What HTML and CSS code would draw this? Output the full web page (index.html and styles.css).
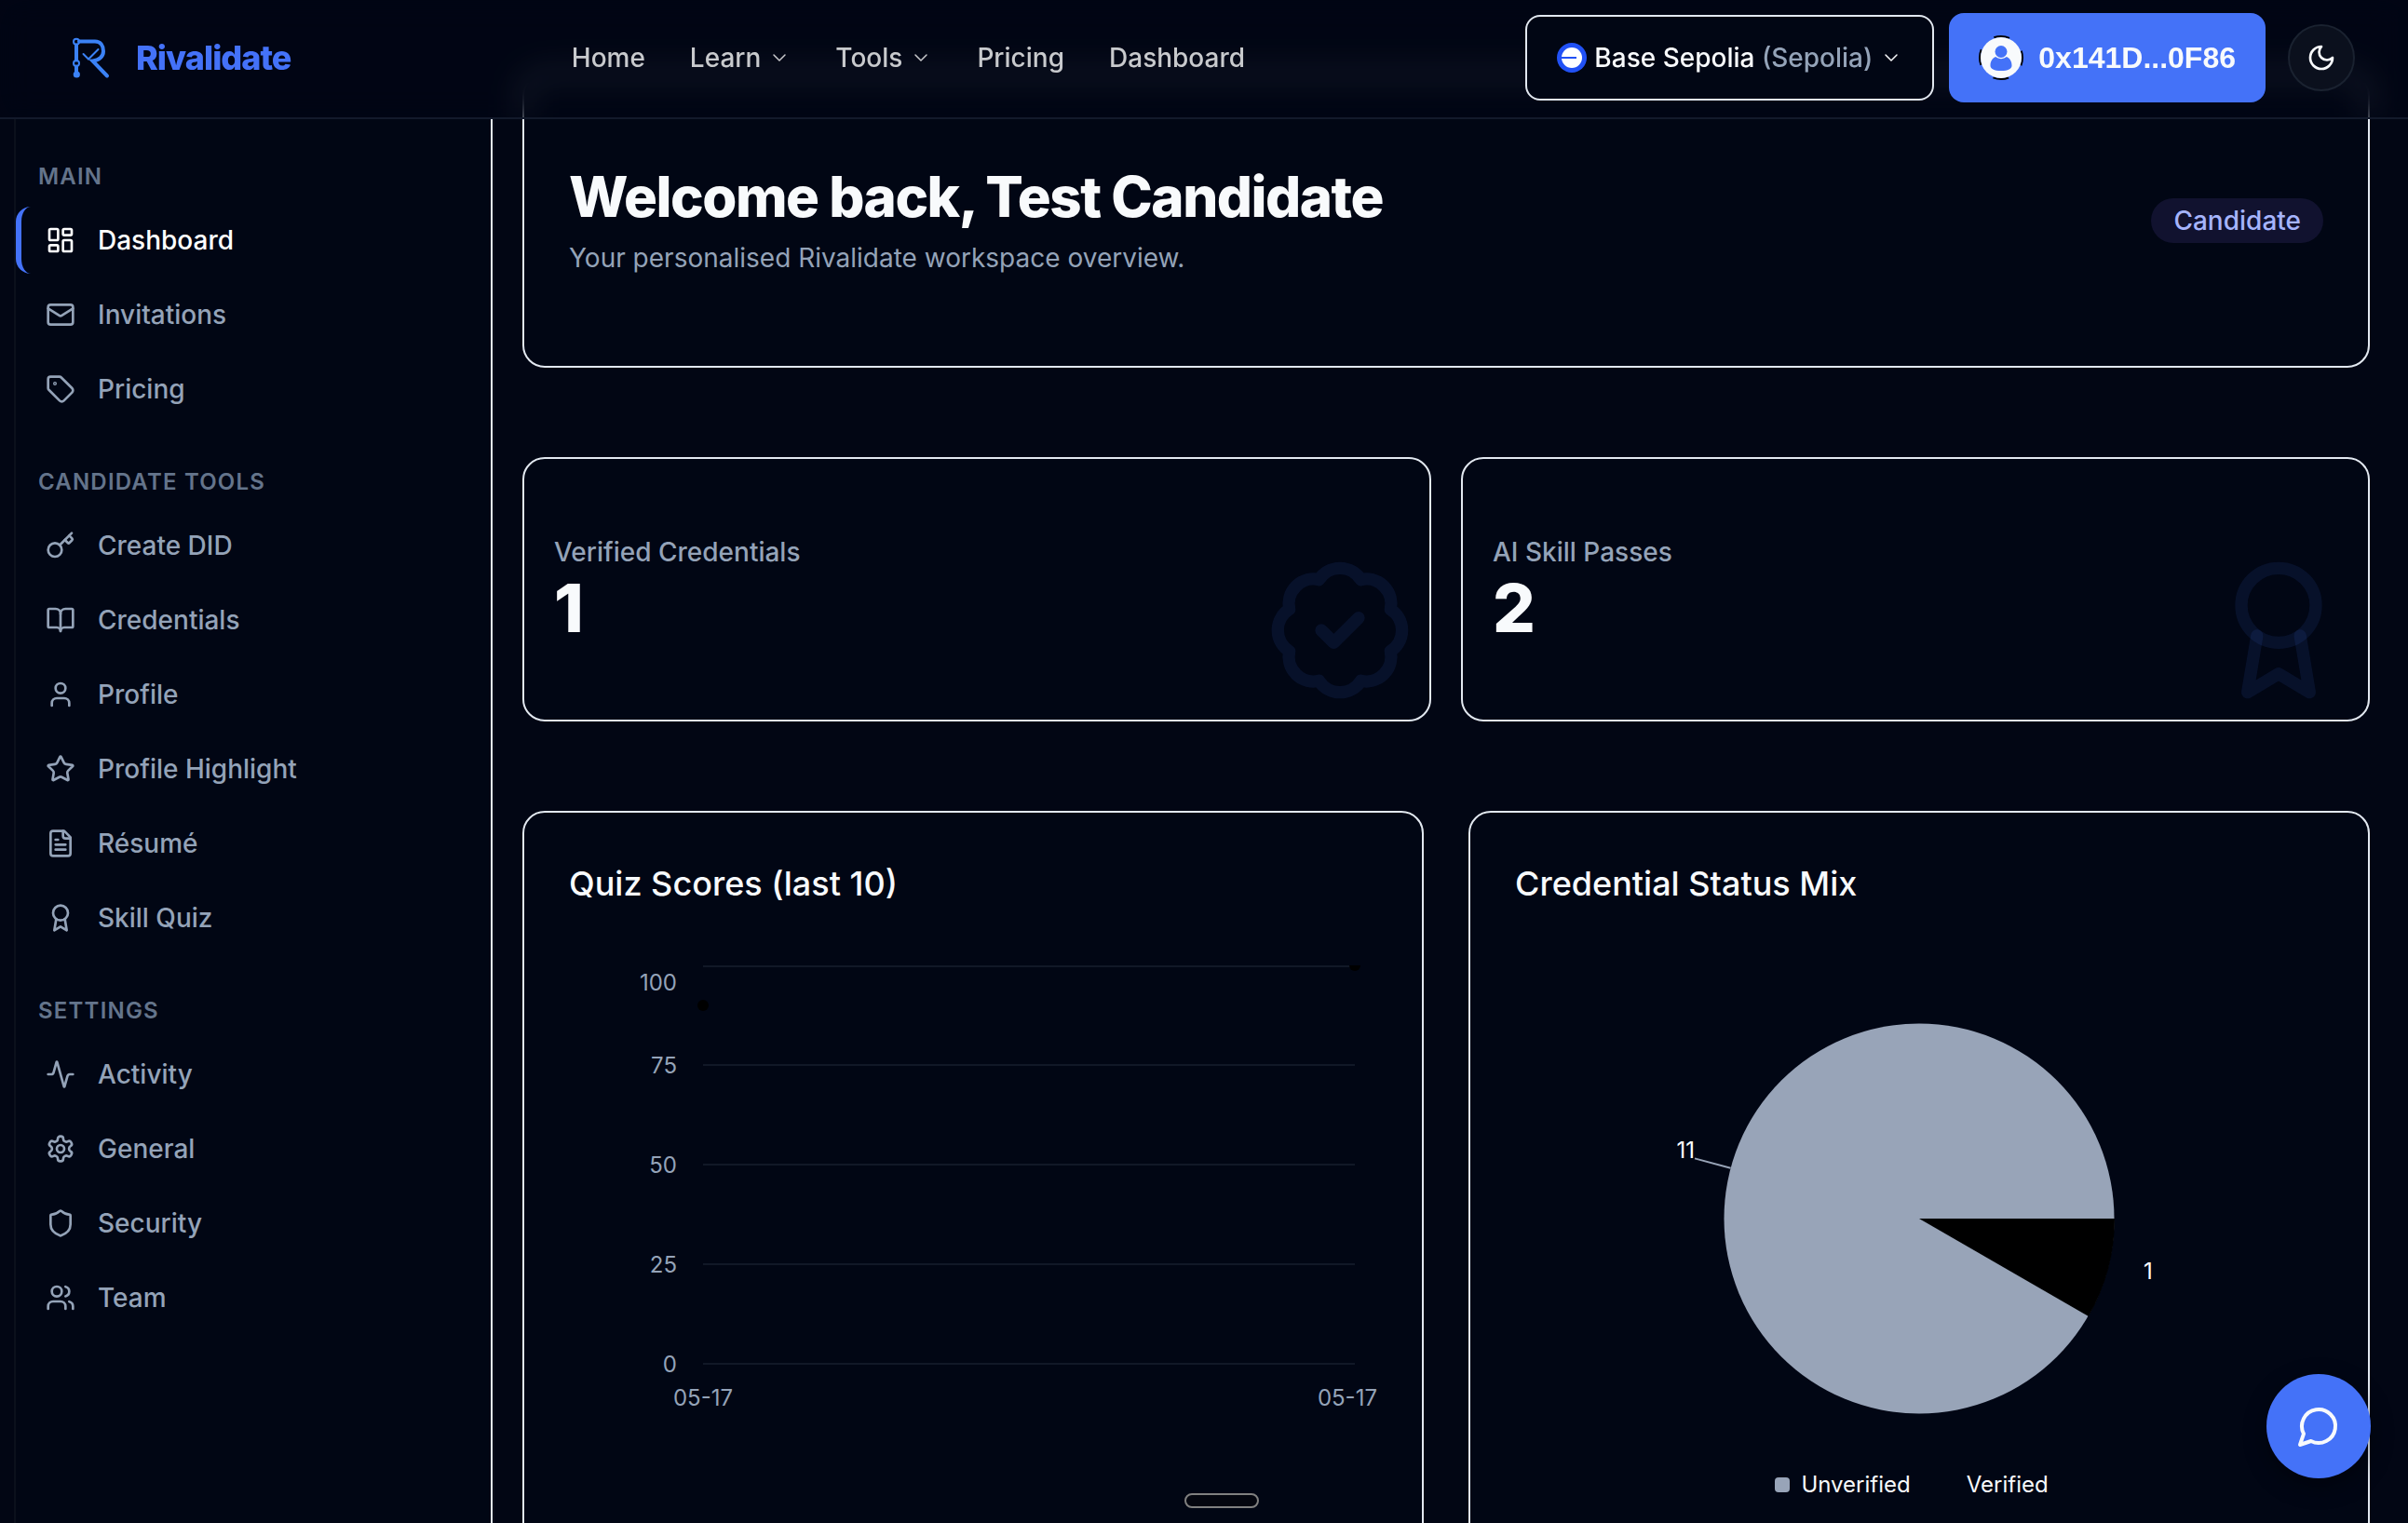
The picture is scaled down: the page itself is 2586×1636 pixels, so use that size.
FILE: index.html
```html
<!DOCTYPE html>
<html lang="en">
<head>
<meta charset="utf-8">
<meta name="viewport" content="width=device-width, initial-scale=1">
<title>Dashboard – Rivalidate</title>
<link rel="stylesheet" href="styles.css">
</head>
<body>
<svg class="sprite" aria-hidden="true">
  <symbol id="chevron" viewBox="0 0 24 24"><path d="m6 9 6 6 6-6"/></symbol>
  <symbol id="award" viewBox="0 0 24 24"><circle cx="12" cy="8" r="6"/><path d="M15.477 12.89 17 22l-5-3-5 3 1.523-9.11"/></symbol>
</svg>

<header class="topbar">
  <a class="brand" href="#">
    <svg class="brand-mark" viewBox="0 0 48 48" aria-hidden="true">
      <path class="mark-line" d="M13 6.500H30c6 0 9 4.500 9 10.500S34 27 27.500 27.500L43 43.500M10 10.500V26.500M10 33.500V41"/>
      <path class="mark-check" d="m17.500 20 5.500 5.500L33.500 15"/>
      <circle class="mark-node" cx="10" cy="6.700" r="3"/>
      <circle class="mark-node" cx="10" cy="30" r="3"/>
      <circle class="mark-dot" cx="10.300" cy="42" r="3.600"/>
    </svg>
    <span>Rivalidate</span>
  </a>
  <nav class="topnav" aria-label="Primary">
    <a href="#">Home</a>
    <button type="button">Learn <svg class="icon-sm"><use href="#chevron"/></svg></button>
    <button type="button">Tools <svg class="icon-sm"><use href="#chevron"/></svg></button>
    <a href="#">Pricing</a>
    <a href="#">Dashboard</a>
  </nav>
  <div class="actions">
    <button class="network" type="button">
      <svg class="chain" viewBox="0 0 32 32" aria-hidden="true"><circle cx="16" cy="16" r="16" fill="#2151f5"/><circle cx="16" cy="16" r="11" fill="#fff"/><path d="M4 15h17v2H4z" fill="#2151f5"/></svg>
      <span>Base Sepolia <span class="muted">(Sepolia)</span></span>
      <svg class="icon-sm"><use href="#chevron"/></svg>
    </button>
    <button class="wallet" type="button">
      <svg class="avatar" viewBox="0 0 48 48" aria-hidden="true">
        <circle cx="24" cy="24" r="23" fill="none" stroke="#000" stroke-width="2" stroke-dasharray="17 19.130" stroke-dashoffset="8.500"/>
        <circle cx="24" cy="24" r="22" fill="#f8fafc"/>
        <circle cx="24" cy="17.500" r="6.500" fill="#4472f8"/>
        <path d="M12.500 32.500c0-4.500 2-8 5.500-9.500a9.500 9.500 0 0 0 12 0c3.500 1.500 5.500 5 5.500 9.500 0 3.500-4 5.500-11.500 5.500s-11.500-2-11.500-5.500z" fill="#4472f8"/>
      </svg>
      0x141D...0F86
    </button>
    <button class="theme" type="button" aria-label="Toggle theme">
      <svg class="icon" viewBox="0 0 24 24"><path d="M12 3a6 6 0 0 0 9 9 9 9 0 1 1-9-9Z"/></svg>
    </button>
  </div>
</header>

<div class="shell">
  <aside class="sidebar">
    <nav class="group" aria-label="Main">
      <h2>Main</h2>
      <a class="active" href="#" aria-current="page"><svg class="icon" viewBox="0 0 24 24"><rect width="7" height="9" x="3" y="3" rx="1"/><rect width="7" height="5" x="14" y="3" rx="1"/><rect width="7" height="9" x="14" y="12" rx="1"/><rect width="7" height="5" x="3" y="16" rx="1"/></svg>Dashboard</a>
      <a href="#"><svg class="icon" viewBox="0 0 24 24"><rect width="20" height="16" x="2" y="4" rx="2"/><path d="m22 7-8.970 5.700a1.940 1.940 0 0 1-2.060 0L2 7"/></svg>Invitations</a>
      <a href="#"><svg class="icon" viewBox="0 0 24 24"><path d="M12.586 2.586A2 2 0 0 0 11.172 2H4a2 2 0 0 0-2 2v7.172a2 2 0 0 0 .586 1.414l8.704 8.704a2.426 2.426 0 0 0 3.420 0l6.580-6.580a2.426 2.426 0 0 0 0-3.420z"/><circle cx="7.500" cy="7.500" r=".5"/></svg>Pricing</a>
    </nav>
    <nav class="group" aria-label="Candidate tools">
      <h2>Candidate Tools</h2>
      <a href="#"><svg class="icon" viewBox="0 0 24 24"><path d="m15.500 7.500 2.300 2.300a1 1 0 0 0 1.400 0l2.100-2.100a1 1 0 0 0 0-1.400L19 4"/><path d="m21 2-9.600 9.600"/><circle cx="7.500" cy="15.500" r="5.500"/></svg>Create DID</a>
      <a href="#"><svg class="icon" viewBox="0 0 24 24"><path d="M12 7v14"/><path d="M3 18a1 1 0 0 1-1-1V4a1 1 0 0 1 1-1h5a4 4 0 0 1 4 4 4 4 0 0 1 4-4h5a1 1 0 0 1 1 1v13a1 1 0 0 1-1 1h-6a3 3 0 0 0-3 3 3 3 0 0 0-3-3z"/></svg>Credentials</a>
      <a href="#"><svg class="icon" viewBox="0 0 24 24"><path d="M19 21v-2a4 4 0 0 0-4-4H9a4 4 0 0 0-4 4v2"/><circle cx="12" cy="7" r="4"/></svg>Profile</a>
      <a href="#"><svg class="icon" viewBox="0 0 24 24"><path d="M11.525 2.295a.53.53 0 0 1 .95 0l2.310 4.679a2.123 2.123 0 0 0 1.595 1.160l5.166.756a.53.53 0 0 1 .294.904l-3.736 3.638a2.123 2.123 0 0 0-.611 1.878l.882 5.140a.53.53 0 0 1-.771.560l-4.618-2.428a2.122 2.122 0 0 0-1.973 0L6.396 21.010a.53.53 0 0 1-.770-.560l.881-5.139a2.122 2.122 0 0 0-.611-1.879L2.160 9.795a.53.53 0 0 1 .294-.906l5.165-.755a2.122 2.122 0 0 0 1.597-1.160z"/></svg>Profile Highlight</a>
      <a href="#"><svg class="icon" viewBox="0 0 24 24"><path d="M15 2H6a2 2 0 0 0-2 2v16a2 2 0 0 0 2 2h12a2 2 0 0 0 2-2V7Z"/><path d="M14 2v4a2 2 0 0 0 2 2h4M10 9H8M16 13H8M16 17H8"/></svg>Résumé</a>
      <a href="#"><svg class="icon"><use href="#award"/></svg>Skill Quiz</a>
    </nav>
    <nav class="group" aria-label="Settings">
      <h2>Settings</h2>
      <a href="#"><svg class="icon" viewBox="0 0 24 24"><path d="M22 12h-2.480a2 2 0 0 0-1.930 1.460l-2.350 8.360a.25.25 0 0 1-.48 0L9.240 2.180a.25.25 0 0 0-.48 0l-2.350 8.360A2 2 0 0 1 4.490 12H2"/></svg>Activity</a>
      <a href="#"><svg class="icon" viewBox="0 0 24 24"><path d="M12.220 2h-.44a2 2 0 0 0-2 2v.18a2 2 0 0 1-1 1.730l-.43.25a2 2 0 0 1-2 0l-.15-.08a2 2 0 0 0-2.730.73l-.22.38a2 2 0 0 0 .73 2.730l.15.1a2 2 0 0 1 1 1.720v.51a2 2 0 0 1-1 1.740l-.15.09a2 2 0 0 0-.73 2.730l.22.38a2 2 0 0 0 2.730.73l.15-.08a2 2 0 0 1 2 0l.43.25a2 2 0 0 1 1 1.730V20a2 2 0 0 0 2 2h.44a2 2 0 0 0 2-2v-.18a2 2 0 0 1 1-1.730l.43-.25a2 2 0 0 1 2 0l.15.08a2 2 0 0 0 2.730-.73l.22-.39a2 2 0 0 0-.73-2.730l-.15-.08a2 2 0 0 1-1-1.740v-.5a2 2 0 0 1 1-1.740l.15-.09a2 2 0 0 0 .73-2.730l-.22-.38a2 2 0 0 0-2.730-.73l-.15.08a2 2 0 0 1-2 0l-.43-.25a2 2 0 0 1-1-1.730V4a2 2 0 0 0-2-2z"/><circle cx="12" cy="12" r="3"/></svg>General</a>
      <a href="#"><svg class="icon" viewBox="0 0 24 24"><path d="M20 13c0 5-3.500 7.500-7.660 8.950a1 1 0 0 1-.67-.01C7.500 20.500 4 18 4 13V6a1 1 0 0 1 1-1c2 0 4.500-1.200 6.240-2.720a1.170 1.170 0 0 1 1.520 0C14.510 3.810 17 5 19 5a1 1 0 0 1 1 1z"/></svg>Security</a>
      <a href="#"><svg class="icon" viewBox="0 0 24 24"><path d="M16 21v-2a4 4 0 0 0-4-4H6a4 4 0 0 0-4 4v2"/><circle cx="9" cy="7" r="4"/><path d="M22 21v-2a4 4 0 0 0-3-3.870M16 3.130a4 4 0 0 1 0 7.750"/></svg>Team</a>
    </nav>
  </aside>

  <main class="content">
    <section class="card welcome">
      <div>
        <h1>Welcome back, Test Candidate</h1>
        <p>Your personalised Rivalidate workspace overview.</p>
      </div>
      <span class="badge">Candidate</span>
    </section>

    <div class="stats">
      <section class="card stat">
        <h2>Verified Credentials</h2>
        <p>1</p>
        <svg class="watermark" viewBox="0 0 24 24" aria-hidden="true"><path d="M3.850 8.620a4 4 0 0 1 4.780-4.770 4 4 0 0 1 6.740 0 4 4 0 0 1 4.780 4.780 4 4 0 0 1 0 6.740 4 4 0 0 1-4.770 4.780 4 4 0 0 1-6.750 0 4 4 0 0 1-4.780-4.770 4 4 0 0 1 0-6.760Z"/><path d="m9 12 2 2 4-4"/></svg>
      </section>
      <section class="card stat">
        <h2>AI Skill Passes</h2>
        <p>2</p>
        <svg class="watermark" aria-hidden="true"><use href="#award"/></svg>
      </section>
    </div>

    <div class="charts">
      <section class="card chart">
        <h2>Quiz Scores (last 10)</h2>
        <svg viewBox="0 0 868 560" role="img" aria-label="Quiz scores line chart">
          <path class="grid" d="M144 13H844M144 119H844M144 226H844M144 333H844M144 440H844"/>
          <g class="ticks" text-anchor="end">
            <text x="116" y="39">100</text>
            <text x="116" y="128">75</text>
            <text x="116" y="235">50</text>
            <text x="116" y="342">25</text>
            <text x="116" y="449">0</text>
          </g>
          <g class="ticks">
            <text x="144" y="485" text-anchor="middle">05-17</text>
            <text x="868" y="485" text-anchor="end">05-17</text>
          </g>
          <circle cx="144" cy="55" r="6"/>
          <path d="M838 12a6 6 0 0 0 12 0z"/>
        </svg>
      </section>
      <section class="card chart">
        <h2>Credential Status Mix</h2>
        <svg viewBox="0 0 868 546" role="img" aria-label="Credential status pie chart">
          <circle cx="434" cy="284" r="209.500" fill="#98a4b8"/>
          <path d="M434 284H644A210 210 0 0 1 615.900 389Z"/>
          <path class="leader" d="M231.600 229.800 193 219.400"/>
          <g class="values">
            <text x="193" y="219" text-anchor="end">11</text>
            <text x="675" y="349">1</text>
          </g>
        </svg>
        <ul class="legend">
          <li><span class="swatch unverified"></span>Unverified</li>
          <li><span class="swatch"></span>Verified</li>
        </ul>
      </section>
    </div>
  </main>
</div>

<div class="handle"></div>
<button class="chat" type="button" aria-label="Open chat">
  <svg viewBox="0 0 24 24"><path d="M7.900 20A9 9 0 1 0 4 16.100L2 22Z"/></svg>
</button>
</body>
</html>
```
FILE: styles.css
```css
:root {
  --bg: #020614;
  --panel: #010614;
  --line: #e2e8f0;
  --faint: #0b101c;
  --muted: #94a3b8;
  --text: #f8fafc;
  --primary: #4472f8;
}

* { box-sizing: border-box; }

body {
  margin: 0;
  background: var(--bg);
  color: var(--text);
  font: 500 28px/40px Inter, "Liberation Sans", sans-serif;
}

h1, h2, p, ul { margin: 0; padding: 0; }
a { color: inherit; text-decoration: none; }
button { border: 0; background: none; color: inherit; font: inherit; padding: 0; cursor: pointer; }

svg { flex: none; }
.sprite { display: none; }

.icon, .icon-sm, .watermark, .chat svg {
  fill: none;
  stroke: currentColor;
  stroke-width: 2;
  stroke-linecap: round;
  stroke-linejoin: round;
}
.icon { width: 32px; height: 32px; }
.icon-sm { width: 24px; height: 24px; stroke-width: 1.5; }

/* Top bar */
.topbar {
  position: fixed;
  z-index: 10;
  top: 0;
  left: 0;
  right: 0;
  display: flex;
  align-items: center;
  justify-content: space-between;
  padding: 14px 57px 16px 72px;
  border-bottom: 2px solid #131a2b;
  background: rgba(1, 6, 20, 0.4);
  backdrop-filter: blur(16px);
}

.brand {
  display: flex;
  align-items: center;
  gap: 26px;
  color: var(--primary);
  font-size: 36px;
  font-weight: 800;
  letter-spacing: -1px;
}
.brand-mark { width: 48px; height: 48px; fill: none; stroke: #3b82f6; }
.mark-line { stroke-width: 4; stroke-linecap: round; }
.mark-check { stroke-width: 2; stroke-linecap: round; }
.mark-node { stroke-width: 2; }
.mark-dot { fill: #3b82f6; stroke: none; }

.topnav { display: flex; gap: 48px; color: #c8cacd; }
.topnav button { display: flex; align-items: center; gap: 8px; }

.actions { display: flex; align-items: center; }
.network {
  display: flex;
  align-items: center;
  gap: 8px;
  height: 92px;
  padding: 0 32px;
  margin-right: 16px;
  border: 2px solid var(--line);
  border-radius: 16px;
  background: var(--panel);
}
.chain { width: 32px; height: 32px; }
.muted { color: var(--muted); }
.wallet {
  display: flex;
  align-items: center;
  gap: 16px;
  height: 96px;
  padding: 0 32px;
  margin-right: 24px;
  border-radius: 16px;
  background: var(--primary);
  font: 700 32px/40px "Liberation Sans", sans-serif;
}
.avatar { width: 48px; height: 48px; }
.theme {
  display: grid;
  place-items: center;
  width: 72px;
  height: 72px;
  border: 2px solid #1a2230;
  border-radius: 50%;
  background: #0b101d;
}

/* Page shell */
.shell { display: flex; height: 100vh; overflow: hidden; }

.sidebar {
  flex: none;
  width: 514px;
  margin: 128px 0 0 15px;
  padding-top: 46px;
  border-left: 2px solid var(--faint);
  border-right: 2px solid var(--line);
  background: var(--panel);
  box-shadow: 2px 0 0 var(--faint);
}
.group { display: flex; flex-direction: column; gap: 8px; margin-bottom: 48px; }
.group h2 {
  margin-bottom: 8px;
  padding-left: 24px;
  color: #64748b;
  font-size: 24px;
  font-weight: 600;
  line-height: 32px;
  letter-spacing: 0.05em;
  text-transform: uppercase;
}
.group a {
  display: flex;
  align-items: center;
  gap: 24px;
  height: 72px;
  padding-left: 26px;
  border-left: 6px solid transparent;
  border-radius: 16px;
  color: var(--muted);
}
.group .active { border-left-color: var(--primary); color: #fff; }

/* Content */
.content {
  flex: 1;
  display: flex;
  flex-direction: column;
  gap: 96px;
  min-width: 0;
  padding: 79px 41px 0 32px;
}
.content > * { flex: none; }
.card { border: 2px solid var(--line); border-radius: 24px; background: var(--panel); }

.welcome {
  display: flex;
  align-items: center;
  justify-content: space-between;
  padding: 96px 48px;
}
.welcome h1 {
  margin-bottom: 12px;
  font-size: 60px;
  font-weight: 800;
  line-height: 68px;
  letter-spacing: -0.025em;
}
.welcome p { color: var(--muted); font-weight: 400; }
.badge {
  padding: 4px 24px;
  border-radius: 24px;
  background: #11122f;
  color: #a5b4fc;
}

.stats { display: grid; grid-template-columns: 1fr 1fr; gap: 32px; }
.stat { position: relative; padding: 80px 32px; }
.stat h2 { color: var(--muted); font-size: 28px; font-weight: 500; line-height: 40px; }
.stat p { font-size: 72px; font-weight: 800; line-height: 80px; }
.watermark {
  position: absolute;
  right: 16px;
  bottom: 16px;
  width: 160px;
  height: 160px;
  color: rgba(68, 114, 248, 0.1);
}

.charts { display: grid; grid-template-columns: 1fr 1fr; gap: 48px; }
.chart { padding: 48px; }
.chart h2 { margin-bottom: 48px; font-size: 36px; font-weight: 500; line-height: 56px; }
.chart svg { display: block; width: 100%; font-size: 24px; font-weight: 400; }
.grid { stroke: #111827; stroke-width: 2; }
.ticks { fill: var(--muted); }
.values { fill: #fff; }
.leader { stroke: #98a4b8; stroke-width: 2; }

.legend {
  display: flex;
  justify-content: center;
  gap: 32px;
  padding-right: 16px;
  list-style: none;
  font-size: 24px;
  font-weight: 400;
  line-height: 48px;
}
.legend li { display: flex; align-items: center; gap: 12px; }
.swatch { width: 16px; height: 16px; border-radius: 4px; }
.unverified { background: #98a4b8; }

/* Floating controls */
.handle {
  position: fixed;
  left: calc(50% - 21px);
  bottom: 16px;
  width: 80px;
  height: 16px;
  border: 2px solid #808080;
  border-radius: 8px;
  background: #04060f;
}
.chat {
  position: fixed;
  right: 40px;
  bottom: 48px;
  display: grid;
  place-items: center;
  width: 112px;
  height: 112px;
  border-radius: 50%;
  background: var(--primary);
  box-shadow: 0 8px 24px rgba(0, 0, 0, 0.4);
}
.chat svg { width: 48px; height: 48px; }
```
